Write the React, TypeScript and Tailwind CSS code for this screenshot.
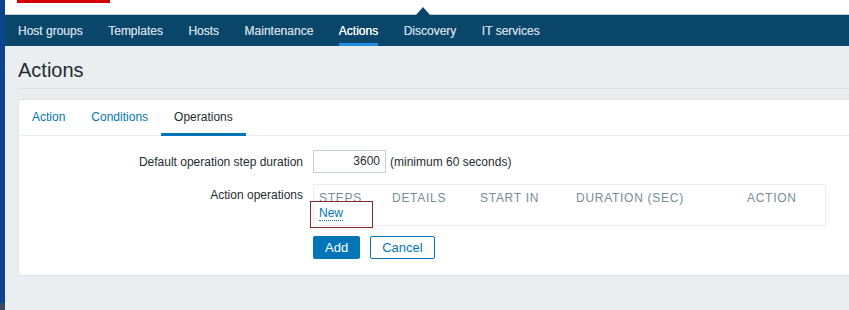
import React from 'react';

const navItems = ['Host groups', 'Templates', 'Hosts', 'Maintenance', 'Actions', 'Discovery', 'IT services'];
const tabs = ['Action', 'Conditions', 'Operations'];
const columns = [
    { label: 'STEPS', w: 'w-[73px]' },
    { label: 'DETAILS', w: 'w-[88px]' },
    { label: 'START IN', w: 'w-[96px]' },
    { label: 'DURATION (SEC)', w: 'w-[170px]' },
    { label: 'ACTION', w: 'w-[70px]' },
];

const App = () => {
    return (
        <div className="h-[310px] w-[849px] overflow-hidden flex bg-[#ebeef0] font-['Liberation_Sans',Arial,sans-serif] text-[12px]">
            {/* left edge strip */}
            <div className="w-[5px] flex flex-col shrink-0">
                <div className="flex-1 bg-[#0b4592]" />
                <div className="h-[7px] bg-[#3b4a5e]" />
            </div>

            <div className="flex-1 flex flex-col min-w-0">
                {/* Header */}
                <div className="h-[15px] bg-white border-b border-[#c5ced4] relative">
                    <div className="absolute left-[12px] top-0 w-[93px] h-[3px] bg-[#d40000]" />
                    <div className="absolute left-[411px] top-[7px] w-0 h-0 border-l-[7px] border-r-[7px] border-b-[8px] border-l-transparent border-r-transparent border-b-[#0a466a]" />
                </div>

                {/* Nav */}
                <div className="h-[31px] bg-[#0a466a] flex items-stretch pl-[13px]">
                    {navItems.map((item) => (
                        <div
                            key={item}
                            className={`flex items-center mr-[25.5px] border-b-[3px] ${item === 'Actions' ? 'text-white border-[#1f8de0] [text-shadow:0_0_0.4px_#fff]' : 'text-[#c9d8e2] border-transparent [text-shadow:0_0_0.4px_#c9d8e2]'}`}
                        >
                            <span className="pt-[3px]">{item}</span>
                        </div>
                    ))}
                </div>

                {/* Page body */}
                <div className="flex-1 pl-[13px]">
                    <div className="h-[43px] flex items-end pb-[8px] border-b border-[#dde2e6]">
                        <h1 className="text-[20px] leading-none text-[#1f2c33]">Actions</h1>
                    </div>

                    <div className="mt-[10px] bg-white border border-[#dfe4e7] border-r-0 h-[177px]">
                        {/* tabs */}
                        <div className="h-[36px] flex border-b border-[#ebeef0]">
                            {tabs.map((t) => (
                                <div
                                    key={t}
                                    className={`flex items-center border-b-[3px] -mb-px px-[13px] ${t === 'Operations' ? 'text-[#1f2c33] border-[#0275b8]' : 'text-[#0275b8] border-transparent'}`}
                                >
                                    {t}
                                </div>
                            ))}
                        </div>

                        {/* form */}
                        <div className="pt-[14px]">
                            <div className="flex items-center">
                                <div className="w-[294px] text-right pr-[10px] text-[#1f2c33]">Default operation step duration</div>
                                <div className="w-[73px] h-[23px] border border-[#c5ced4] text-right pr-[5px] leading-[21px] text-[#1f2c33]">3600</div>
                                <span className="ml-[4px] text-[#1f2c33]">(minimum 60 seconds)</span>
                            </div>

                            <div className="flex mt-[11px]">
                                <div className="w-[294px] text-right pr-[10px] pt-[4px] leading-[14px] text-[#1f2c33]">Action operations</div>
                                <div className="w-[513px] h-[42px] border border-[#ebeef0] px-[5px] pt-[6px] relative">
                                    <div className="flex text-[#768d99] tracking-[0.06em] leading-[14px]">
                                        {columns.map((c, i) => (
                                            <div key={c.label} className={`${c.w} ${i === 4 ? 'ml-[1px]' : ''}`}>{c.label}</div>
                                        ))}
                                    </div>
                                    <div className="leading-[14px] mt-[1px]">
                                        <span className="text-[#0275b8] border-b border-dotted border-[#0275b8]">New</span>
                                    </div>
                                    <div className="absolute left-[-4px] top-[16px] w-[63px] h-[27px] border border-[#8c2a2a]" />
                                </div>
                            </div>

                            <div className="flex mt-[10px] ml-[294px] gap-[10px]">
                                <button className="h-[23px] px-[12px] bg-[#0275b8] text-white rounded-[2px] text-[13px]">Add</button>
                                <button className="h-[23px] px-[11px] border border-[#0275b8] text-[#0275b8] rounded-[2px] text-[13px]">Cancel</button>
                            </div>
                        </div>
                    </div>
                </div>
            </div>
        </div>
    );
};

export default App;
